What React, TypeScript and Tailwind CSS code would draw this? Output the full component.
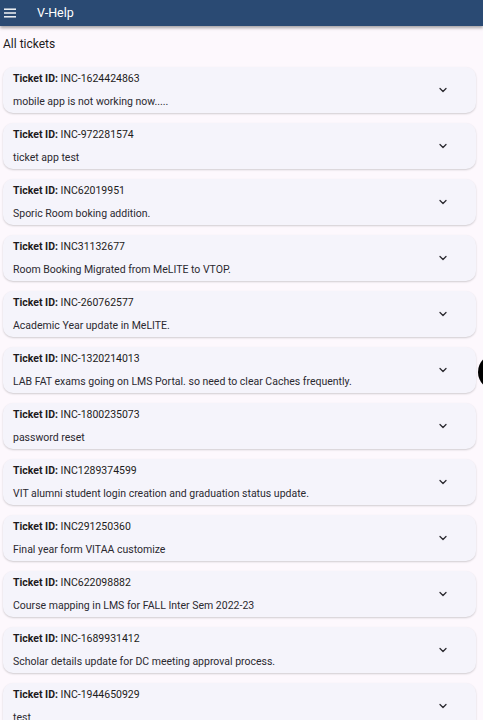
import { ChevronDown } from 'lucide-react';

const tickets = [
  { id: 'INC-1624424863', desc: 'mobile app is not working now.....' },
  { id: 'INC-972281574', desc: 'ticket app test' },
  { id: 'INC62019951', desc: 'Sporic Room boking addition.' },
  { id: 'INC31132677', desc: 'Room Booking Migrated from MeLITE to VTOP.' },
  { id: 'INC-260762577', desc: 'Academic Year update in MeLITE.' },
  { id: 'INC-1320214013', desc: 'LAB FAT exams going on LMS Portal. so need to clear Caches frequently.' },
  { id: 'INC-1800235073', desc: 'password reset' },
  { id: 'INC1289374599', desc: 'VIT alumni student login creation and graduation status update.' },
  { id: 'INC291250360', desc: 'Final year form VITAA customize' },
  { id: 'INC622098882', desc: 'Course mapping in LMS for FALL Inter Sem 2022-23' },
  { id: 'INC-1689931412', desc: 'Scholar details update for DC meeting approval process.' },
  { id: 'INC-1944650929', desc: 'test' },
];

export default function App() {
  return (
    <div
      className="relative h-[720px] w-[483px] overflow-hidden bg-[#fdf8fd] text-[#1d1b20]"
      style={{ fontFamily: 'Roboto, "Noto Sans", sans-serif' }}
    >
      {/* App bar */}
      <div className="relative z-10 flex h-[26px] items-center bg-[#2a4a73] shadow-[0_2px_3px_rgba(0,0,0,0.35)]">
        <svg className="ml-[4px] h-[12px] w-[12px]" viewBox="0 0 12 12" fill="#ffffff">
          <rect x="0" y="1.5" width="12" height="1.4" />
          <rect x="0" y="5.3" width="12" height="1.4" />
          <rect x="0" y="9.1" width="12" height="1.4" />
        </svg>
        <span className="ml-[21px] text-[12.5px] text-white">V-Help</span>
      </div>

      <div className="px-[3px] pt-[11px]">
        <p className="text-[12px] leading-[14px] text-[#1d1b20]">All tickets</p>

        <div className="mt-[16px] flex flex-col gap-[10px] pr-[4px]">
          {tickets.map((t) => (
            <div
              key={t.id}
              className="flex h-[46px] items-center rounded-[10px] bg-[#f5f4fb] pl-[10px] pr-[27px] shadow-[0_1px_2px_rgba(0,0,0,0.18)]"
            >
              <div className="flex flex-1 flex-col gap-[11px] pt-[1px]">
                <p className="text-[10.5px] leading-[12px] text-[#1d1b20]">
                  <span className="font-bold">Ticket ID:</span> {t.id}
                </p>
                <p className="text-[10.5px] leading-[12px] text-[#2b2930]">{t.desc}</p>
              </div>
              <ChevronDown className="h-[12px] w-[12px] text-[#2b2930]" strokeWidth={2.6} />
            </div>
          ))}
        </div>
      </div>

      {/* floating circle, partly off-screen */}
      <div className="absolute left-[478px] top-[354px] h-[36px] w-[36px] rounded-full bg-black" />
    </div>
  );
}
